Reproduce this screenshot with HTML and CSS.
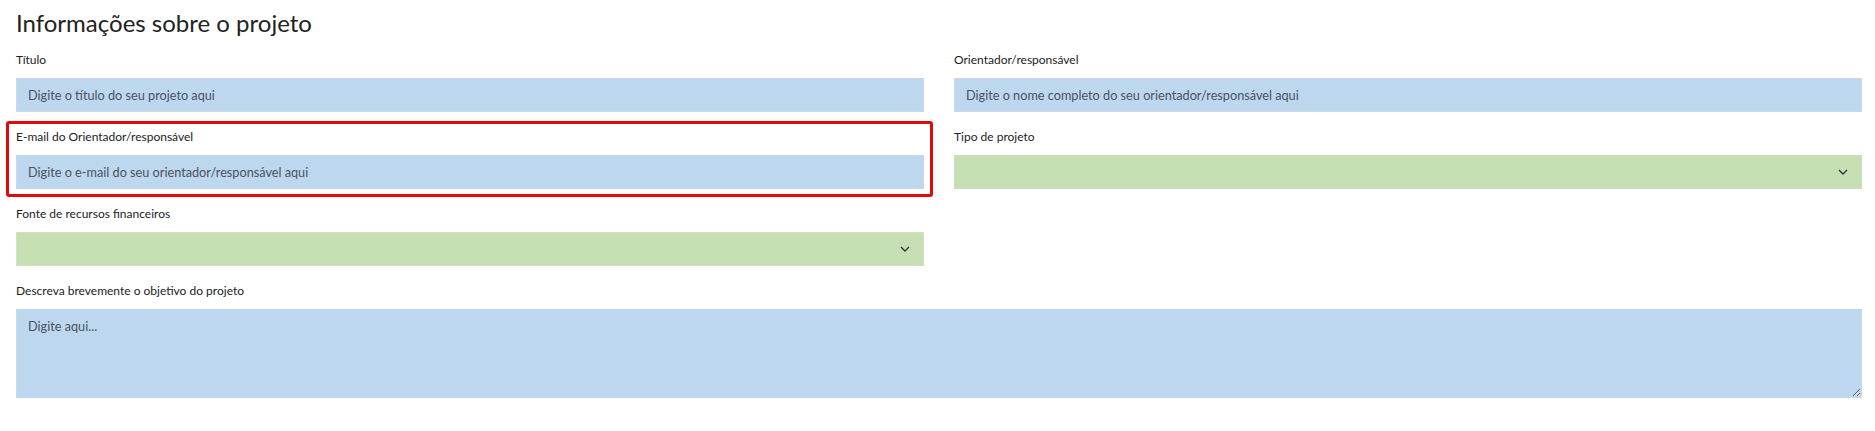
FILE: index.html
```html
<!DOCTYPE html>
<html lang="pt-BR">
<head>
  <meta charset="UTF-8">
  <meta name="viewport" content="width=device-width, initial-scale=1.0">
  <title>Informações sobre o projeto</title>
  <link rel="stylesheet" href="styles.css">
</head>
<body>
  <div class="page">
    <h2 class="section-title">Informações sobre o projeto</h2>
    <form class="form-grid">
      <div class="field">
        <label for="titulo">Título</label>
        <input type="text" id="titulo" class="input-blue" placeholder="Digite o título do seu projeto aqui">
      </div>
      <div class="field">
        <label for="orientador">Orientador/responsável</label>
        <input type="text" id="orientador" class="input-blue" placeholder="Digite o nome completo do seu orientador/responsável aqui">
      </div>
      <div class="field highlight">
        <label for="email">E-mail do Orientador/responsável</label>
        <input type="email" id="email" class="input-blue" placeholder="Digite o e-mail do seu orientador/responsável aqui">
      </div>
      <div class="field">
        <label for="tipo">Tipo de projeto</label>
        <div class="select-wrap">
          <select id="tipo" class="input-green">
            <option></option>
            <option>Pesquisa</option>
            <option>Extensão</option>
          </select>
          <svg class="chevron" viewBox="0 0 10 6" fill="none" stroke="#333" stroke-width="1.4">
            <path d="M1 1l4 4 4-4"/>
          </svg>
        </div>
      </div>
      <div class="field">
        <label for="fonte">Fonte de recursos financeiros</label>
        <div class="select-wrap">
          <select id="fonte" class="input-green">
            <option></option>
            <option>Bolsa</option>
            <option>Recursos próprios</option>
          </select>
          <svg class="chevron" viewBox="0 0 10 6" fill="none" stroke="#333" stroke-width="1.4">
            <path d="M1 1l4 4 4-4"/>
          </svg>
        </div>
      </div>
      <div class="field"></div>
      <div class="field full">
        <label for="objetivo">Descreva brevemente o objetivo do projeto</label>
        <textarea id="objetivo" class="input-blue" placeholder="Digite aqui..."></textarea>
      </div>
    </form>
  </div>
</body>
</html>
```

FILE: styles.css
```css
* { box-sizing: border-box; }
body {
  margin: 0;
  background: #fff;
  color: #222;
  font-family: Lato, "Open Sans", sans-serif;
}
.page {
  padding: 9px 13px 20px 16px;
}
.section-title {
  margin: 0 0 13px;
  font-size: 24px;
  font-weight: 400;
  line-height: 28px;
  color: #222;
}
.form-grid {
  display: grid;
  grid-template-columns: 1fr 1fr;
  column-gap: 30px;
  row-gap: 15px;
}
.field {
  position: relative;
}
.field.full {
  grid-column: 1 / -1;
}
.field label {
  display: block;
  font-size: 12px;
  line-height: 20px;
  margin-bottom: 8px;
  color: #222;
}
.input-blue,
.input-green {
  display: block;
  width: 100%;
  height: 34px;
  padding: 0 11px;
  font-family: inherit;
  font-size: 12.7px;
  color: #495057;
  border: 1px solid #c9d8e6;
  border-radius: 0;
  background-color: #bdd7ee;
  outline: none;
}
.input-blue::placeholder {
  color: #4a5262;
}
.input-green {
  appearance: none;
  background-color: #c6e0b4;
  border-color: #cfe0c3;
}
textarea.input-blue {
  height: 89px;
  padding-top: 7px;
  line-height: 18px;
}
.select-wrap {
  position: relative;
}
.chevron {
  position: absolute;
  right: 14px;
  top: 14px;
  width: 10px;
  height: 6px;
  pointer-events: none;
}
/* caixa vermelha em volta do campo de e-mail */
.field.highlight::after {
  content: "";
  position: absolute;
  top: -6px;
  bottom: -8px;
  left: -10px;
  right: -9px;
  border: 3px solid #e00a0a;
  border-radius: 3px;
  pointer-events: none;
}
```
